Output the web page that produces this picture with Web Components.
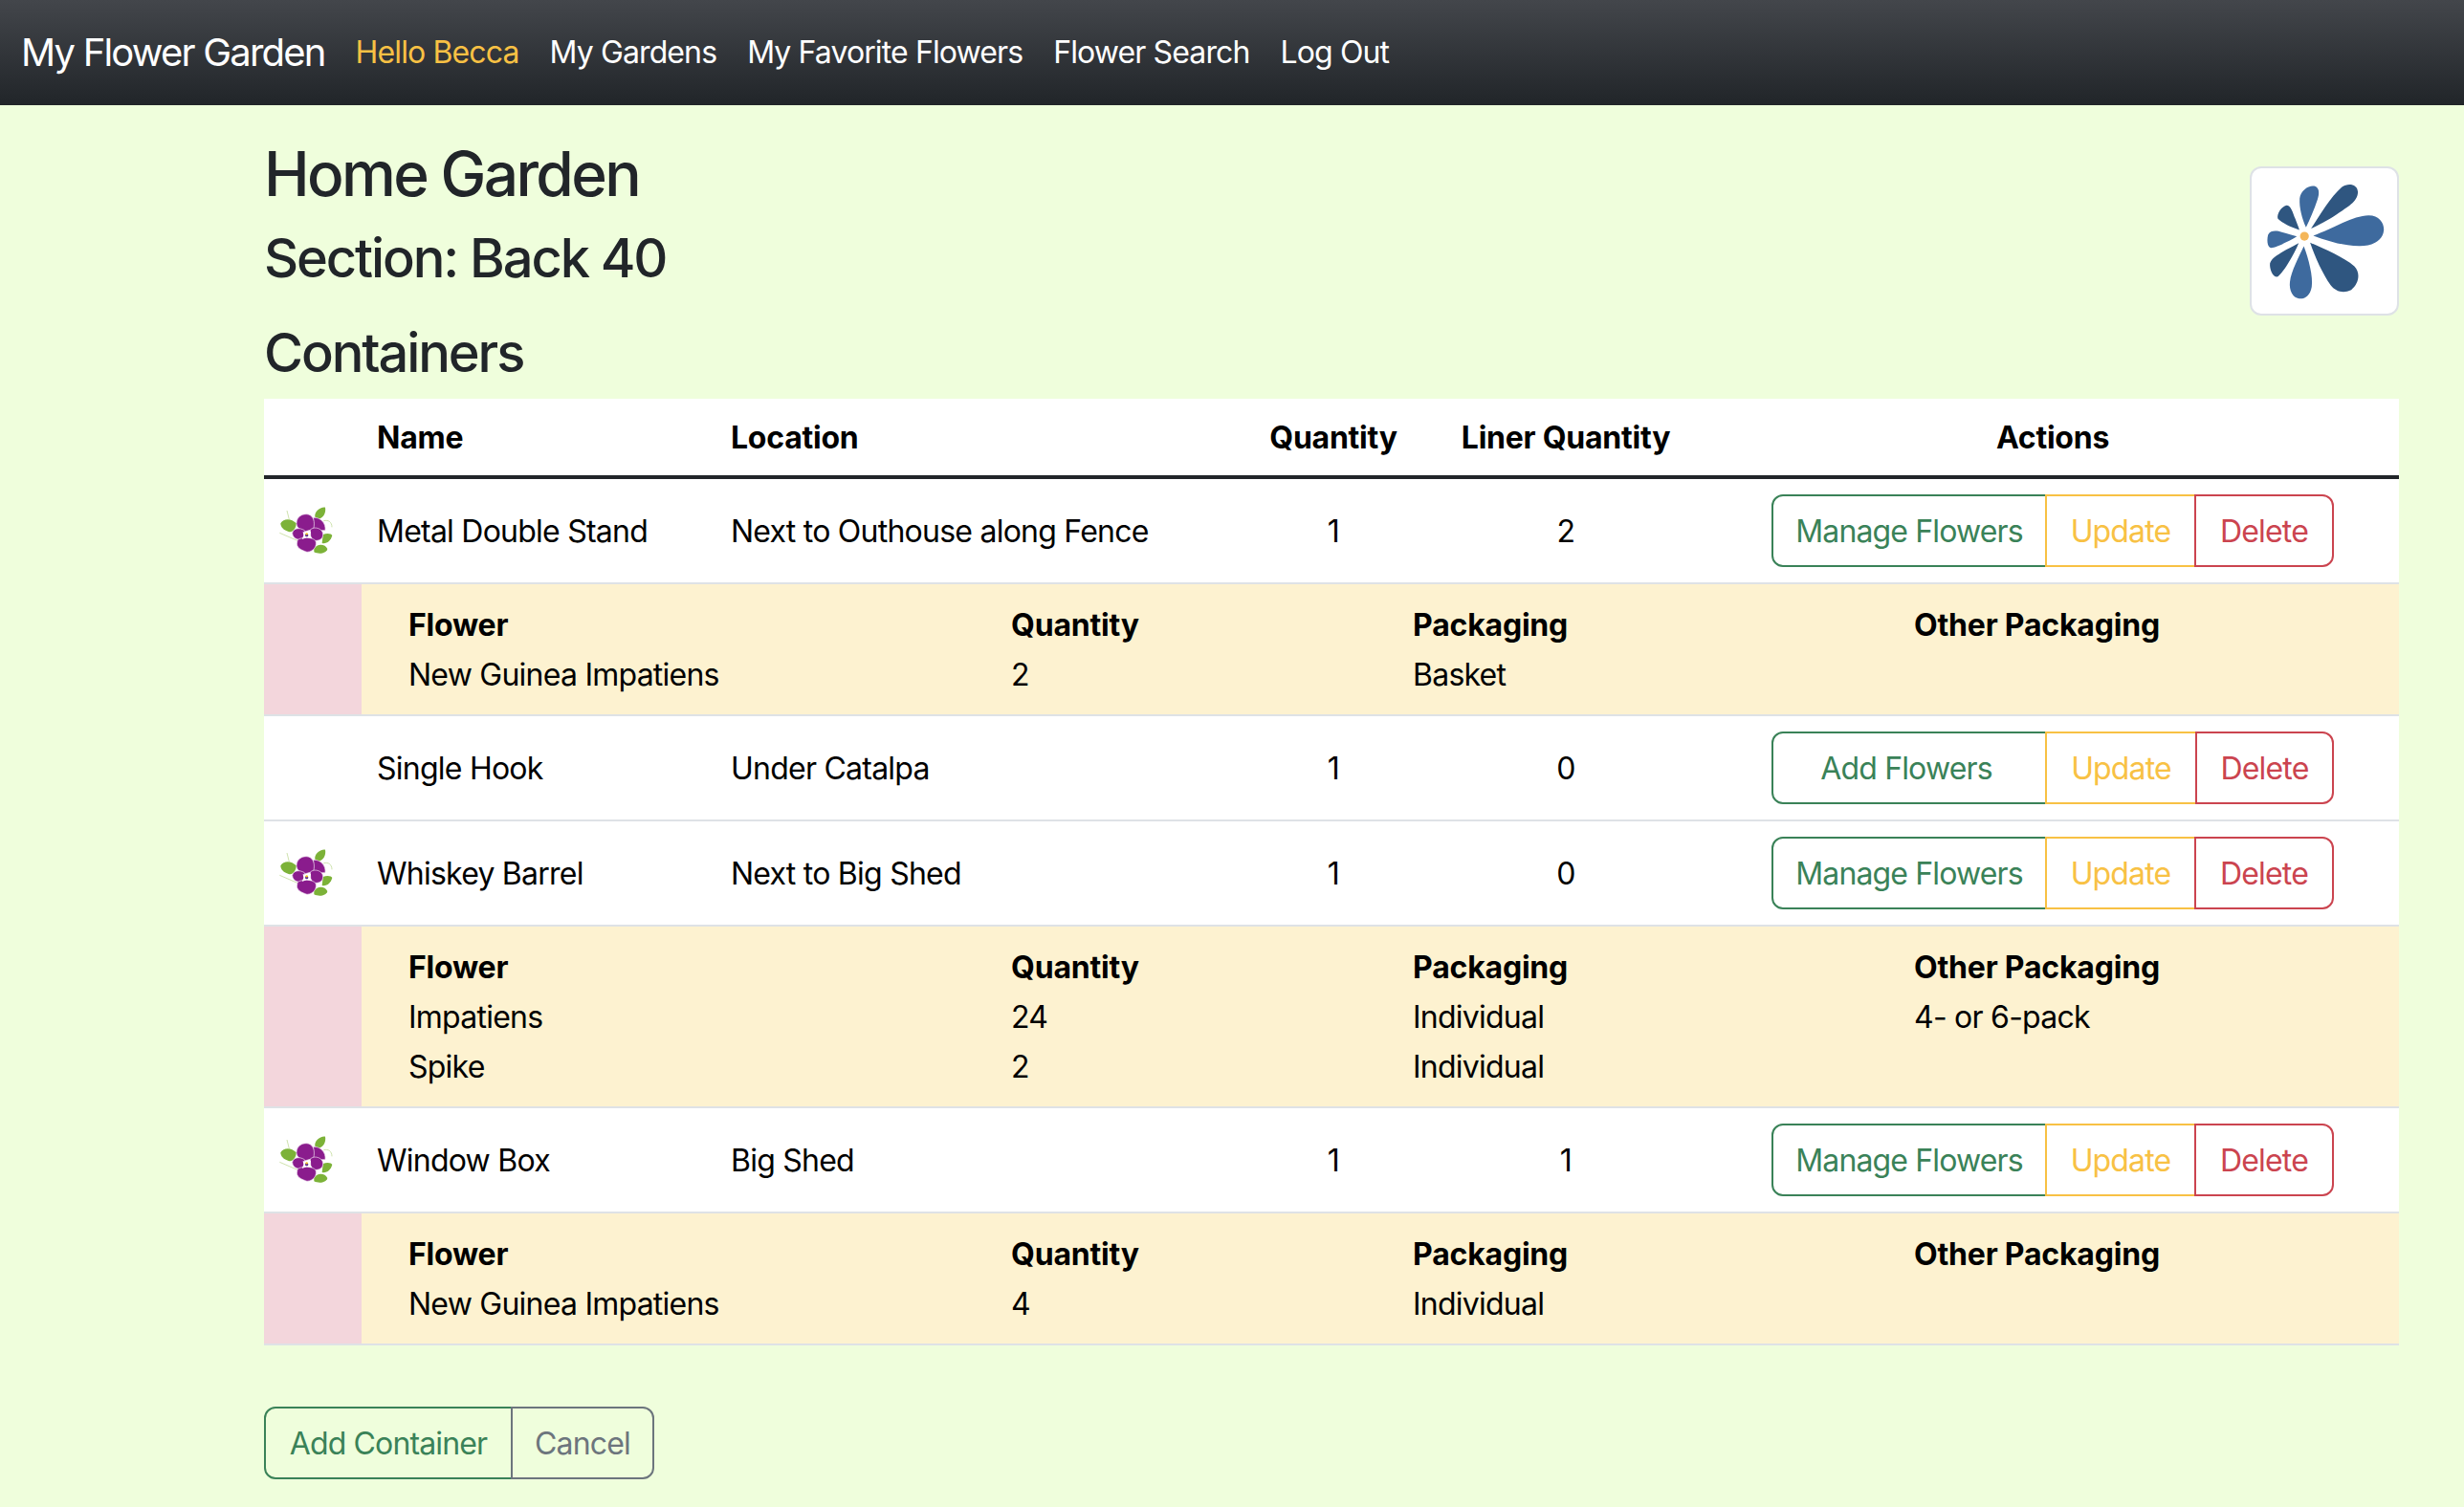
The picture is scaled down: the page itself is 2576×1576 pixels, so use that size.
<!DOCTYPE html>
<html>
<head>
<meta charset="utf-8">
<title>My Flower Garden</title>
<style>
html, body { margin: 0; padding: 0; }
body {
  background: #effedc;
  font-family: Inter, "Liberation Sans", sans-serif;
  font-size: 32px;
  line-height: 48px;
  color: #212529;
  letter-spacing: -0.76px;
}
</style>
</head>
<body>
<garden-navbar brand="My Flower Garden">
  <garden-navlink active>Hello Becca</garden-navlink>
  <garden-navlink>My Gardens</garden-navlink>
  <garden-navlink>My Favorite Flowers</garden-navlink>
  <garden-navlink>Flower Search</garden-navlink>
  <garden-navlink>Log Out</garden-navlink>
</garden-navbar>

<garden-page>
  <garden-header title="Home Garden" section="Section: Back 40"></garden-header>
  <containers-table>
    <container-row name="Metal Double Stand" location="Next to Outhouse along Fence" qty="1" liner="2" flowered></container-row>
    <flower-detail rows="New Guinea Impatiens|2|Basket|"></flower-detail>
    <container-row name="Single Hook" location="Under Catalpa" qty="1" liner="0"></container-row>
    <container-row name="Whiskey Barrel" location="Next to Big Shed" qty="1" liner="0" flowered></container-row>
    <flower-detail rows="Impatiens|24|Individual|4- or 6-pack;Spike|2|Individual|"></flower-detail>
    <container-row name="Window Box" location="Big Shed" qty="1" liner="1" flowered></container-row>
    <flower-detail rows="New Guinea Impatiens|4|Individual|"></flower-detail>
  </containers-table>
  <form-actions></form-actions>
</garden-page>

<script>
const GREEN = "#3a8258";
const YELLOW = "#f8c144";
const RED = "#cb444f";
const GREY = "#6c757d";

class GardenNavbar extends HTMLElement {
  constructor() {
    super();
    this.attachShadow({ mode: "open" });
    this.shadowRoot.innerHTML = `<style>
      :host {
        display: flex;
        align-items: center;
        height: 110px;
        padding-left: 22px;
        background: linear-gradient(180deg, #43464b 0%, #212529 100%);
      }
      .brand { font-size: 40px; color: #fff; margin-right: 16px; letter-spacing: -1.8px; }
      nav { display: flex; letter-spacing: -0.88px; }
    </style>
    <span class="brand">${this.getAttribute("brand")}</span>
    <nav><slot></slot></nav>`;
  }
}

class GardenNavlink extends HTMLElement {
  constructor() {
    super();
    this.attachShadow({ mode: "open" });
    this.shadowRoot.innerHTML = `<style>
      :host { display: block; padding: 0 16px; color: #fff; }
      :host([active]) { color: #f8c144; }
    </style><slot></slot>`;
  }
}

class GardenPage extends HTMLElement {
  constructor() {
    super();
    this.attachShadow({ mode: "open" });
    this.shadowRoot.innerHTML = `<style>
      :host { display: block; padding: 0 68px 0 276px; }
    </style><slot></slot>`;
  }
}

class GardenHeader extends HTMLElement {
  constructor() {
    super();
    this.attachShadow({ mode: "open" });
    this.shadowRoot.innerHTML = `<style>
      :host { display: flex; justify-content: space-between; align-items: flex-start; padding-top: 32px; height: 307px; box-sizing: border-box; }
      h1, h2 { margin: 0; font-weight: 500; color: #212529; }
      h1 { font-size: 64px; line-height: 80px; letter-spacing: -2.65px; }
      h2 { font-size: 56px; line-height: 62px; letter-spacing: -2.1px; }
      .section { margin-top: 17px; }
      .containers { margin-top: 37px; }
      .thumb {
        width: 156px; height: 156px; margin-top: 32px; box-sizing: border-box;
        background: #fff; border: 2px solid #dee2e6; border-radius: 12px;
      }
      svg { display: block; width: 100%; height: 100%; }
    </style>
    <div>
      <h1>${this.getAttribute("title")}</h1>
      <h2 class="section">${this.getAttribute("section")}</h2>
      <h2 class="containers">Containers</h2>
    </div>
    <div class="thumb">
      <svg viewBox="160 75 460 460">
        <g fill="#3e6a9e">
          <path d="M355 288C420 265 480 225 530 224C565 224 580 250 578 272C575 305 540 322 500 321C450 320 400 305 355 288Z"/>
          <path d="M332 262C320 235 310 200 312 170C315 145 340 128 358 131C375 135 375 155 368 175C358 205 345 235 332 262Z"/>
          <path d="M303 291C280 305 240 325 222 327C208 325 208 300 212 285C220 270 240 272 255 277C275 282 290 287 303 291Z"/>
          <path d="M325 322C340 360 355 420 350 450C345 480 325 490 310 487C290 485 278 460 281 435C285 400 310 355 325 322Z"/>
        </g>
        <g fill="#2f5680">
          <path d="M348 266C375 225 410 165 445 135C465 120 495 125 496 150C497 180 460 200 430 220C400 240 370 255 348 266Z"/>
          <path d="M311 270C285 262 255 248 243 235C238 220 255 195 270 192C285 192 290 215 298 235C303 248 308 260 311 270Z"/>
          <path d="M309 312C295 345 265 400 243 418C228 422 216 395 218 375C225 355 250 345 270 332C285 325 298 318 309 312Z"/>
          <path d="M345 310C390 330 450 355 485 385C505 405 500 440 475 460C450 472 425 465 410 445C385 410 360 355 345 310Z"/>
        </g>
        <circle cx="327" cy="290" r="14" fill="#f4b65a"/>
      </svg>
    </div>`;
  }
}

class ContainersTable extends HTMLElement {
  constructor() {
    super();
    this.attachShadow({ mode: "open" });
    this.shadowRoot.innerHTML = `<style>
      :host {
        display: block;
        background: #fff;
        color: #000;
        --cols: 102px 370px 550px 192px 294px 724px;
      }
      .head {
        display: grid;
        grid-template-columns: var(--cols);
        height: 84px;
        box-sizing: border-box;
        border-bottom: 4px solid #212529;
        align-items: center;
        font-weight: 700;
        letter-spacing: -0.24px;
      }
      .head span { padding: 2px 16px 0; }
      .c { text-align: center; }
    </style>
    <div class="head">
      <span></span><span>Name</span><span>Location</span>
      <span class="c">Quantity</span><span class="c">Liner Quantity</span><span class="c">Actions</span>
    </div>
    <slot></slot>`;
  }
}

class ContainerRow extends HTMLElement {
  constructor() {
    super();
    this.attachShadow({ mode: "open" });
    const flowered = this.hasAttribute("flowered");
    const pansy = flowered ? `<svg viewBox="0 0 210 186" width="70" height="62">
      <path d="M22 100L80 125M45 30L52 58M160 62C175 58 186 66 186 82" stroke="#c4dc9c" stroke-width="2.5" fill="none"/>
      <g fill="#7cb238">
        <path d="M25 70C35 52 60 55 75 70C72 90 62 100 50 96C35 92 25 82 25 70Z"/>
        <path d="M133 50C130 35 148 18 165 20C168 35 160 52 145 56Z"/>
        <path d="M158 105C170 100 185 102 187 108C182 125 170 135 155 132Z"/>
        <path d="M130 150C140 132 165 135 172 150C168 165 145 168 130 160Z"/>
      </g>
      <g fill="#8a1c8d" stroke="#f0e0f0" stroke-width="2">
        <path d="M128 52C150 50 168 70 165 92L128 92Z"/>
        <path d="M75 70C75 48 95 38 112 42C128 46 134 65 128 88L100 96C88 88 75 85 75 70Z"/>
        <path d="M62 100C65 85 85 82 100 92L103 120C85 125 62 120 62 100Z"/>
        <path d="M118 90C130 78 158 85 158 105C158 122 140 128 120 122Z"/>
        <path d="M78 122C90 112 125 112 135 125C140 140 130 158 108 160C95 155 78 150 76 135Z"/>
      </g>
      <path d="M95 96L107 100L120 95L118 108L125 118L108 114L92 120L97 108Z" fill="#fff"/>
      <circle cx="107" cy="107" r="5" fill="#5a2a90"/>
      <circle cx="107" cy="103" r="3.5" fill="#f0c020"/>
    </svg>` : "";
    const first = flowered ? "Manage Flowers" : "Add Flowers";
    const updateW = flowered ? 158 : 159;
    const deleteW = flowered ? 146 : 145;
    this.shadowRoot.innerHTML = `<style>
      :host {
        display: grid;
        grid-template-columns: var(--cols);
        height: 110px;
        box-sizing: border-box;
        border-bottom: 2px solid #dee2e6;
        align-items: center;
      }
      .cell { padding: 2px 16px 0; }
      .pic { padding: 0 0 0 9px; display: flex; }
      .c { text-align: center; }
      .actions { padding-left: 68px; }
    </style>
    <div class="pic">${pansy}</div>
    <div class="cell">${this.getAttribute("name")}</div>
    <div class="cell">${this.getAttribute("location")}</div>
    <div class="cell c">${this.getAttribute("qty")}</div>
    <div class="cell c">${this.getAttribute("liner")}</div>
    <div class="actions">
      <btn-group>
        <outline-btn color="${GREEN}" w="288" ${flowered ? "" : 'pr="6"'}>${first}</outline-btn>
        <outline-btn color="${YELLOW}" w="${updateW}">Update</outline-btn>
        <outline-btn color="${RED}" w="${deleteW}">Delete</outline-btn>
      </btn-group>
    </div>`;
  }
}

class FlowerDetail extends HTMLElement {
  constructor() {
    super();
    this.attachShadow({ mode: "open" });
    const rows = this.getAttribute("rows").split(";").map(r => r.split("|"));
    const cells = rows.map(r => r.map(t => `<div>${t}</div>`).join("")).join("");
    this.shadowRoot.innerHTML = `<style>
      :host {
        display: grid;
        grid-template-columns: 102px 1fr;
        border-bottom: 2px solid #dee2e6;
        color: #000;
      }
      .pink { background: #f3d6dc; }
      .list {
        background: #fdf2d0;
        padding: 16px 0 16px 49px;
        display: grid;
        grid-template-columns: 630px 420px 524px 1fr;
        grid-auto-rows: 52px;
        align-items: center;
      }
      .list > * { padding-top: 2px; }
      b { font-weight: 700; letter-spacing: -0.2px; }
    </style>
    <div class="pink"></div>
    <div class="list">
      <b>Flower</b><b>Quantity</b><b>Packaging</b><b>Other Packaging</b>
      ${cells}
    </div>`;
  }
}

class BtnGroup extends HTMLElement {
  constructor() {
    super();
    this.attachShadow({ mode: "open" });
    this.shadowRoot.innerHTML = `<style>
      :host { display: inline-flex; vertical-align: middle; }
      ::slotted(outline-btn:first-child) { --radius: 12px 0 0 12px; }
      ::slotted(outline-btn:last-child) { --radius: 0 12px 12px 0; margin-right: 0; }
    </style><slot></slot>`;
  }
}

class OutlineBtn extends HTMLElement {
  constructor() {
    super();
    this.attachShadow({ mode: "open" });
    const c = this.getAttribute("color");
    const w = this.getAttribute("w");
    const pr = this.getAttribute("pr") || 0;
    this.shadowRoot.innerHTML = `<style>
      :host {
        display: block;
        height: 76px;
        width: ${w}px;
        padding-right: ${pr}px;
        margin-right: -2px;
        box-sizing: border-box;
        border: 2px solid ${c};
        border-radius: var(--radius, 0);
        color: ${c};
        text-align: center;
        line-height: 74px;
        letter-spacing: -0.85px;
      }
    </style><slot></slot>`;
  }
}

class FormActions extends HTMLElement {
  constructor() {
    super();
    this.attachShadow({ mode: "open" });
    this.shadowRoot.innerHTML = `<style>
      :host { display: block; padding-top: 64px; }
    </style>
    <btn-group>
      <outline-btn color="${GREEN}" w="260">Add Container</outline-btn>
      <outline-btn color="${GREY}" w="150">Cancel</outline-btn>
    </btn-group>`;
  }
}

customElements.define("garden-navbar", GardenNavbar);
customElements.define("garden-navlink", GardenNavlink);
customElements.define("garden-page", GardenPage);
customElements.define("garden-header", GardenHeader);
customElements.define("containers-table", ContainersTable);
customElements.define("container-row", ContainerRow);
customElements.define("flower-detail", FlowerDetail);
customElements.define("btn-group", BtnGroup);
customElements.define("outline-btn", OutlineBtn);
customElements.define("form-actions", FormActions);
</script>
</body>
</html>
